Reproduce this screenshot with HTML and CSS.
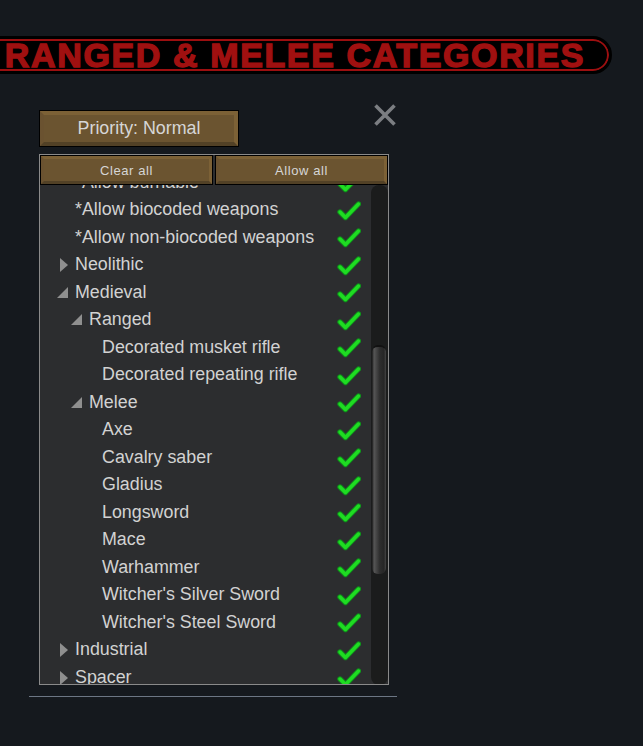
FILE: index.html
```html
<!DOCTYPE html>
<html lang="en">
<head>
<meta charset="utf-8">
<title>Ranged &amp; Melee Categories</title>
<link rel="stylesheet" href="styles.css">
</head>
<body>
<svg width="0" height="0" class="defs" aria-hidden="true">
  <symbol id="check" viewBox="0 0 24 20">
    <path d="M3 11 L8.5 16.5 L21.5 3" fill="none" stroke="#0f8f1c" stroke-width="5.4" stroke-linecap="round" stroke-linejoin="round"/>
    <path d="M3 11 L8.5 16.5 L21.5 3" fill="none" stroke="#1fdc22" stroke-width="3.4" stroke-linecap="round" stroke-linejoin="round"/>
  </symbol>
  <symbol id="tri-right" viewBox="0 0 8 14"><path d="M0 0 L8 7 L0 14 Z" fill="#8f8f8f"/></symbol>
  <symbol id="tri-down" viewBox="0 0 11 11"><path d="M11 0 L11 11 L0 11 Z" fill="#8f8f8f"/></symbol>
</svg>
<header class="title-bar"><h1 class="title">RANGED &amp; MELEE CATEGORIES</h1></header>
<main class="dialog">
  <div class="top-row">
    <button class="btn btn-priority">Priority: Normal</button>
    <svg class="close" viewBox="0 0 24 24" width="24" height="24" aria-label="Close"><path d="M2.5 2.5 L21.5 21.5 M21.5 2.5 L2.5 21.5" stroke="#7b7e82" stroke-width="3.6" fill="none"/></svg>
  </div>
  <section class="panel">
    <div class="actions">
      <button class="btn btn-small">Clear all</button>
      <button class="btn btn-small">Allow all</button>
    </div>
    <div class="viewport">
      <ul class="tree">
        <li class="row d1"><span class="label">*Allow burnable</span><svg class="tick"><use href="#check"/></svg></li>
        <li class="row d1"><span class="label">*Allow biocoded weapons</span><svg class="tick"><use href="#check"/></svg></li>
        <li class="row d1"><span class="label">*Allow non-biocoded weapons</span><svg class="tick"><use href="#check"/></svg></li>
        <li class="row d1"><svg class="arrow right"><use href="#tri-right"/></svg><span class="label">Neolithic</span><svg class="tick"><use href="#check"/></svg></li>
        <li class="row d1"><svg class="arrow down"><use href="#tri-down"/></svg><span class="label">Medieval</span><svg class="tick"><use href="#check"/></svg></li>
        <li class="row d2"><svg class="arrow down"><use href="#tri-down"/></svg><span class="label">Ranged</span><svg class="tick"><use href="#check"/></svg></li>
        <li class="row d3"><span class="label">Decorated musket rifle</span><svg class="tick"><use href="#check"/></svg></li>
        <li class="row d3"><span class="label">Decorated repeating rifle</span><svg class="tick"><use href="#check"/></svg></li>
        <li class="row d2"><svg class="arrow down"><use href="#tri-down"/></svg><span class="label">Melee</span><svg class="tick"><use href="#check"/></svg></li>
        <li class="row d3"><span class="label">Axe</span><svg class="tick"><use href="#check"/></svg></li>
        <li class="row d3"><span class="label">Cavalry saber</span><svg class="tick"><use href="#check"/></svg></li>
        <li class="row d3"><span class="label">Gladius</span><svg class="tick"><use href="#check"/></svg></li>
        <li class="row d3"><span class="label">Longsword</span><svg class="tick"><use href="#check"/></svg></li>
        <li class="row d3"><span class="label">Mace</span><svg class="tick"><use href="#check"/></svg></li>
        <li class="row d3"><span class="label">Warhammer</span><svg class="tick"><use href="#check"/></svg></li>
        <li class="row d3"><span class="label">Witcher's Silver Sword</span><svg class="tick"><use href="#check"/></svg></li>
        <li class="row d3"><span class="label">Witcher's Steel Sword</span><svg class="tick"><use href="#check"/></svg></li>
        <li class="row d1"><svg class="arrow right"><use href="#tri-right"/></svg><span class="label">Industrial</span><svg class="tick"><use href="#check"/></svg></li>
        <li class="row d1"><svg class="arrow right"><use href="#tri-right"/></svg><span class="label">Spacer</span><svg class="tick"><use href="#check"/></svg></li>
      </ul>
      <div class="scroll-track"><div class="scroll-thumb"></div></div>
    </div>
  </section>
  <div class="rule"></div>
</main>
</body>
</html>
```
FILE: styles.css
```css
* { box-sizing: border-box; }
html, body { margin: 0; height: 100%; }
body {
  background: #15191e;
  font-family: "Liberation Sans", Arial, sans-serif;
  color: #d2d2d2;
  overflow: hidden;
  padding-top: 36px;
}
.defs { position: absolute; }
.title-bar {
  width: 652px;
  height: 38px;
  margin-left: -40px;
  background: #000;
  border: 3px solid #000;
  border-radius: 19px;
  box-shadow: inset 0 0 0 2px #9c0f10;
  display: flex;
  align-items: center;
  justify-content: flex-end;
  padding-right: 24px;
}
.title {
  margin: 0;
  font-size: 34px;
  line-height: 1;
  font-weight: 700;
  color: #a01010;
  letter-spacing: 1.62px;
  -webkit-text-stroke: 1.4px #a01010;
  white-space: nowrap;
}
.dialog {
  width: 368px;
  margin: 0 0 0 29px;
  padding-top: 36px;
}
.top-row {
  display: flex;
  justify-content: space-between;
  align-items: flex-start;
  padding-left: 10px;
  height: 44px;
}
.close { margin-top: -7px; }
.btn {
  display: block;
  font-family: inherit;
  background: #6b5430;
  border-style: solid;
  border-color: #7c6136 #7c6136 #524126 #6a5230;
  color: #d6d6d6;
  outline: 1px solid #000;
  outline-offset: -1px;
  padding: 0;
}
.btn-priority {
  width: 200px;
  height: 37px;
  border-width: 5px;
  font-size: 17.85px;
}
.panel {
  width: 350px;
  margin-left: 10px;
  border: 1px solid #8a8a8a;
  background: #2c2d2f;
}
.actions {
  display: flex;
  gap: 2px;
  height: 30px;
}
.btn-small {
  flex: 1;
  height: 30px;
  border-width: 4px;
  font-size: 13px;
  letter-spacing: 0.6px;
}
.viewport {
  position: relative;
  height: 499px;
  overflow: hidden;
}
.tree {
  list-style: none;
  margin: -16.4px 0 0;
  padding: 0;
}
.row {
  position: relative;
  height: 27.5px;
  display: flex;
  align-items: center;
  font-size: 17.85px;
  padding-right: 27px;
}
.d1 { padding-left: 35px; }
.d2 { padding-left: 49px; }
.d3 { padding-left: 62px; }
.label { flex: 1; white-space: nowrap; }
.arrow { position: absolute; }
.arrow.right { width: 8px; height: 14px; left: 20px; top: 7px; }
.d1 .arrow.down { width: 11px; height: 11px; left: 17px; top: 8px; }
.d2 .arrow.down { width: 11px; height: 11px; left: 31px; top: 8px; }
.tick { width: 24px; height: 20px; flex: none; margin-top: 2px; }
.scroll-track {
  position: absolute;
  right: 0;
  top: 0;
  width: 17px;
  height: 500px;
  background: #1b1c1c;
  border-radius: 8px;
}
.scroll-thumb {
  position: absolute;
  top: 160px;
  left: 1px;
  width: 14px;
  height: 229px;
  border-radius: 6px;
  border-top: 2px solid #111;
  background: linear-gradient(to right, #1b1b1b, #565656 15%, #2e2e2e 55%, #262626 85%, #444);
}
.rule {
  height: 1px;
  margin-top: 11px;
  background: #6c7684;
}
```
